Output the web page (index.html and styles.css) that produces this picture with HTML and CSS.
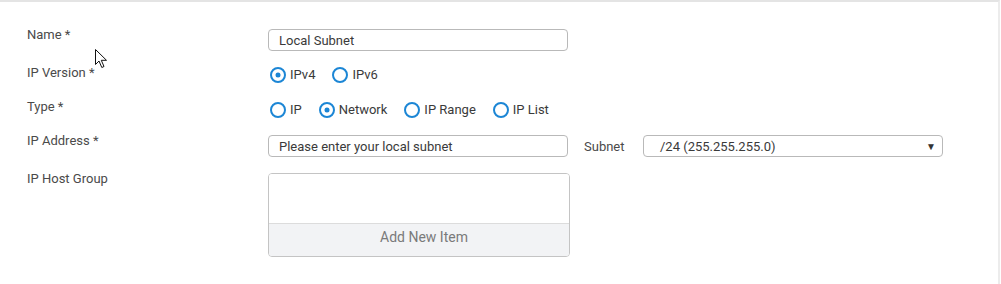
FILE: index.html
```html
<!DOCTYPE html>
<html lang="en">
  <head>
    <meta charset="UTF-8" />
    <title>Local Subnet</title>
    <link rel="stylesheet" href="styles.css">
  </head>
  <body>
    <div class="panel">
      <div class="form">
        <div class="form-row row-input">
          <label class="field-label">Name *</label>
          <div class="field">
            <input class="text-input" type="text" value="Local Subnet" />
          </div>
        </div>

        <div class="form-row row-radio">
          <label class="field-label">IP Version *</label>
          <div class="field radio-group">
            <span class="radio checked"></span><span class="radio-text">IPv4</span>
            <span class="radio"></span><span class="radio-text">IPv6</span>
          </div>
        </div>

        <div class="form-row row-radio type-row">
          <label class="field-label">Type *</label>
          <div class="field radio-group">
            <span class="radio"></span><span class="radio-text">IP</span>
            <span class="radio checked"></span><span class="radio-text">Network</span>
            <span class="radio"></span><span class="radio-text">IP Range</span>
            <span class="radio"></span><span class="radio-text">IP List</span>
          </div>
        </div>

        <div class="form-row row-input">
          <label class="field-label">IP Address *</label>
          <div class="field inline-fields">
            <input class="text-input" type="text" value="Please enter your local subnet" />
            <span class="inline-label">Subnet</span>
            <div class="select">
              <span>/24 (255.255.255.0)</span>
              <span class="select-arrow">&#9660;</span>
            </div>
          </div>
        </div>

        <div class="form-row">
          <label class="field-label">IP Host Group</label>
          <div class="field">
            <div class="list-box">
              <div class="list-items"></div>
              <div class="list-add">Add New Item</div>
            </div>
          </div>
        </div>
      </div>

      <!-- mouse pointer captured in the screenshot -->
      <svg class="cursor" width="13" height="20" viewBox="0 0 13 20">
        <path d="M0.5 0.5 L0.5 15.5 L4 12 L6.8 18.5 L9 17.5 L6.3 11.3 L11.5 11.3 Z"
          fill="#ffffff" stroke="#111111" stroke-width="1" stroke-linejoin="round" />
      </svg>
    </div>
  </body>
</html>
```

FILE: styles.css
```css
* {
  margin: 0;
  padding: 0;
  box-sizing: border-box;
}

body {
  font-family: "Roboto", "Liberation Sans", sans-serif;
  font-size: 13px;
  color: #4a4a4a;
  background: #ffffff;
}

.panel {
  position: relative;
  width: 1000px;
  height: 284px;
  border-top: 2px solid #e4e4e4;
  border-right: 2px solid #ececec;
}

.form {
  padding: 25px 0 0 27px;
}

.form-row {
  display: flex;
  align-items: flex-start;
}

.row-input {
  height: 38px;
}

.row-radio {
  height: 34px;
}

.field-label {
  width: 241px;
  line-height: 16px;
  color: #4a4a4a;
}

.field {
  padding-top: 2px;
}

.text-input {
  width: 300px;
  height: 22px;
  border: 1px solid #b9b9b9;
  border-radius: 4px;
  padding: 0 10px;
  font-family: "Roboto", "Liberation Sans", sans-serif;
  font-size: 13px;
  color: #3a3a3a;
  outline: none;
}

.radio-group {
  display: flex;
  align-items: center;
  height: 16px;
  padding-top: 0;
  margin-top: 2px;
}

.type-row .radio-group {
  margin-top: 3px;
}

.radio {
  width: 16px;
  height: 16px;
  border: 2px solid #1c86d5;
  border-radius: 50%;
  margin-left: 2px;
  position: relative;
}

.radio-text + .radio {
  margin-left: 17px;
}

.radio.checked::after {
  content: "";
  position: absolute;
  left: 4px;
  top: 4px;
  width: 4px;
  height: 4px;
  border-radius: 50%;
  background: #1c86d5;
  box-shadow: 0 0 0 0.5px #1c86d5;
}

.radio-text {
  margin-left: 4px;
  color: #3a3a3a;
  line-height: 16px;
}

.inline-fields {
  display: flex;
  align-items: center;
}

.inline-label {
  margin-left: 16px;
  width: 59px;
  color: #4a4a4a;
}

.select {
  width: 300px;
  height: 22px;
  border: 1px solid #b9b9b9;
  border-radius: 4px;
  padding: 0 6px 0 16px;
  display: flex;
  align-items: center;
  justify-content: space-between;
  color: #3a3a3a;
}

.select-arrow {
  font-size: 10px;
  color: #333333;
}

.list-box {
  width: 302px;
  height: 84px;
  border: 1px solid #c4c4c4;
  border-radius: 4px;
  overflow: hidden;
}

.list-items {
  height: 50px;
  background: #ffffff;
  border-bottom: 1px solid #dcdcdc;
}

.list-add {
  height: 32px;
  background: #f2f3f5;
  text-align: center;
  padding-left: 10px;
  line-height: 27px;
  font-size: 14px;
  color: #7a7a7a;
}

.cursor {
  position: absolute;
  left: 95px;
  top: 47px;
}
```
